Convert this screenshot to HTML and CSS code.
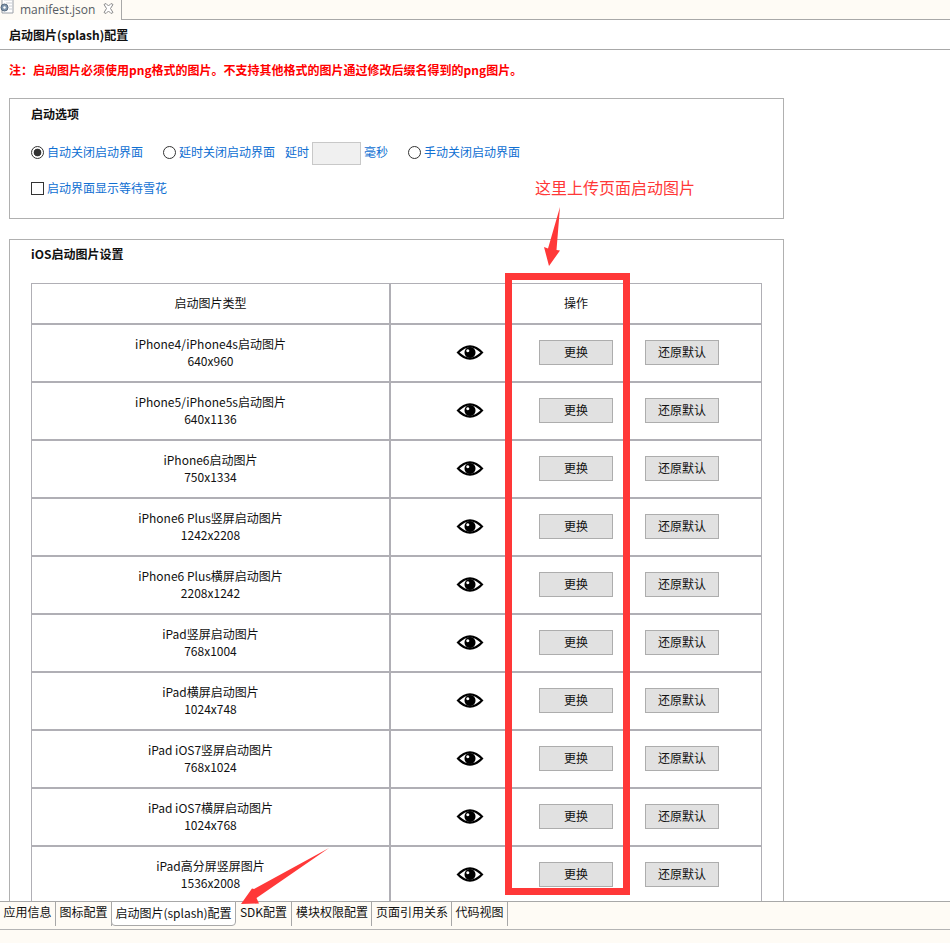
FILE: index.html
```html
<!DOCTYPE html>
<html lang="zh">
<head>
<meta charset="utf-8">
<title>manifest.json</title>
<link rel="stylesheet" href="styles.css">
</head>
<body>
<svg width="0" height="0" class="defs"><defs>
<symbol id="eye" viewBox="0 0 28 17">
<path d="M0.5 8.5C5 3.500 9.500 1.200 14 1.200S23 3.500 27.500 8.500C23 13.500 18.500 15.800 14 15.800S5 13.500 0.500 8.500ZM3.500 8.500C7 11.600 10.500 13.500 14 13.500S21 11.600 24.500 8.500C21 5.400 17.500 3.500 14 3.500S7 5.400 3.500 8.500Z" fill-rule="evenodd"/>
<path d="M14 3a5.500 5.500 0 1 0 .01 0ZM11.800 5.200a1.500 1.500 0 1 1-.01 0Z" fill-rule="evenodd"/>
</symbol>
</defs></svg>
<div class="page">
  <div class="top-tabs">
    <div class="file-tab">
      <svg class="file-icon" width="15" height="17" viewBox="0 0 15 17"><path d="M2 0V14H13V0" fill="#fff" stroke="#9aa0a8"/><path d="M4 1H12M6 4H12M9 7H12M9 10H12" stroke="#c8ccd2"/><circle cx="4.500" cy="8.500" r="3.500" fill="#7f96ad" stroke="#56697d"/><circle cx="4.500" cy="8.500" r="1.200" fill="#fff"/></svg>
      <span class="file-name">manifest.json</span>
      <svg class="file-close" width="11" height="11" viewBox="0 0 11 11"><path d="M1 1.500L3 .5L5.500 3L8 .5L10 1.500L7.500 5.500L10 9.500L8 10.500L5.500 8L3 10.500L1 9.500L3.500 5.500Z" fill="#fff" stroke="#8b8b8b"/></svg>
    </div>
    <div class="tab-fill"></div>
  </div>
  <main class="content">
    <h1 class="page-title">启动图片(splash)配置</h1>
    <p class="notice">注：启动图片必须使用png格式的图片。不支持其他格式的图片通过修改后缀名得到的png图片。</p>
    <section class="panel panel-options">
      <h2 class="panel-title">启动选项</h2>
      <div class="options-row">
        <span class="radio radio-on"></span><span class="opt-label">自动关闭启动界面</span>
        <span class="radio radio-second"></span><span class="opt-label">延时关闭启动界面</span>
        <span class="opt-label delay-label">延时</span><span class="delay-input"></span><span class="opt-label">毫秒</span>
        <span class="radio radio-third"></span><span class="opt-label">手动关闭启动界面</span>
      </div>
      <div class="check-row"><span class="checkbox"></span><span class="opt-label">启动界面显示等待雪花</span></div>
    </section>
    <section class="panel panel-ios">
      <h2 class="panel-title">iOS启动图片设置</h2>
      <div class="table">
        <div class="row row-head">
          <div class="cell-name">启动图片类型</div>
          <div class="cell-actions"><span></span><span class="head-op">操作</span><span></span></div>
        </div>
        <div class="row">
          <div class="cell-name"><div>iPhone4/iPhone4s启动图片</div><div>640x960</div></div>
          <div class="cell-actions"><svg class="eye"><use href="#eye"/></svg><button class="btn">更换</button><button class="btn">还原默认</button></div>
        </div>
        <div class="row">
          <div class="cell-name"><div>iPhone5/iPhone5s启动图片</div><div>640x1136</div></div>
          <div class="cell-actions"><svg class="eye"><use href="#eye"/></svg><button class="btn">更换</button><button class="btn">还原默认</button></div>
        </div>
        <div class="row">
          <div class="cell-name"><div>iPhone6启动图片</div><div>750x1334</div></div>
          <div class="cell-actions"><svg class="eye"><use href="#eye"/></svg><button class="btn">更换</button><button class="btn">还原默认</button></div>
        </div>
        <div class="row">
          <div class="cell-name"><div>iPhone6 Plus竖屏启动图片</div><div>1242x2208</div></div>
          <div class="cell-actions"><svg class="eye"><use href="#eye"/></svg><button class="btn">更换</button><button class="btn">还原默认</button></div>
        </div>
        <div class="row">
          <div class="cell-name"><div>iPhone6 Plus横屏启动图片</div><div>2208x1242</div></div>
          <div class="cell-actions"><svg class="eye"><use href="#eye"/></svg><button class="btn">更换</button><button class="btn">还原默认</button></div>
        </div>
        <div class="row">
          <div class="cell-name"><div>iPad竖屏启动图片</div><div>768x1004</div></div>
          <div class="cell-actions"><svg class="eye"><use href="#eye"/></svg><button class="btn">更换</button><button class="btn">还原默认</button></div>
        </div>
        <div class="row">
          <div class="cell-name"><div>iPad横屏启动图片</div><div>1024x748</div></div>
          <div class="cell-actions"><svg class="eye"><use href="#eye"/></svg><button class="btn">更换</button><button class="btn">还原默认</button></div>
        </div>
        <div class="row">
          <div class="cell-name"><div>iPad iOS7竖屏启动图片</div><div>768x1024</div></div>
          <div class="cell-actions"><svg class="eye"><use href="#eye"/></svg><button class="btn">更换</button><button class="btn">还原默认</button></div>
        </div>
        <div class="row">
          <div class="cell-name"><div>iPad iOS7横屏启动图片</div><div>1024x768</div></div>
          <div class="cell-actions"><svg class="eye"><use href="#eye"/></svg><button class="btn">更换</button><button class="btn">还原默认</button></div>
        </div>
        <div class="row">
          <div class="cell-name"><div>iPad高分屏竖屏图片</div><div>1536x2008</div></div>
          <div class="cell-actions"><svg class="eye"><use href="#eye"/></svg><button class="btn">更换</button><button class="btn">还原默认</button></div>
        </div>
      </div>
    </section>
  </main>
  <nav class="bottom-tabs">
    <div class="btab btab-a">应用信息</div>
    <div class="btab btab-a">图标配置</div>
    <div class="btab btab-active">启动图片(splash)配置</div>
    <div class="btab btab-a">SDK配置</div>
    <div class="btab btab-b">模块权限配置</div>
    <div class="btab btab-b">页面引用关系</div>
    <div class="btab btab-a">代码视图</div>
  </nav>
  <div class="callout-text">这里上传页面启动图片</div>
  <div class="callout-box"></div>
  <svg class="callout-arrows" width="950" height="943" viewBox="0 0 950 943">
    <path d="M560 207L556.500 250L560 250.500L549 266L544 247L548 248.500Z" fill="#ff3838"/>
    <path d="M329 848L254 889L252 888.500L241 904L259 903.500L256.500 898Z" fill="#ff3838"/>
  </svg>
</div>
</body>
</html>
```
FILE: styles.css
```css
* { box-sizing: border-box; }
html, body { margin: 0; padding: 0; }
body {
  background: #fff;
  color: #111;
  font-family: "Noto Sans CJK SC", "Noto Sans", sans-serif;
  font-size: 12px;
}
.defs { position: absolute; }
.page {
  position: relative;
  width: 950px;
  height: 943px;
  overflow: hidden;
  display: flex;
  flex-direction: column;
}
.top-tabs { display: flex; height: 20px; flex: none; }
.file-tab {
  width: 122px;
  height: 20px;
  background: #fefbf5;
  border-right: 1px solid #a8a8a8;
  display: flex;
  align-items: center;
  overflow: hidden;
}
.file-icon { flex: none; margin-top: -6px; margin-left: 0; }
.file-name {
  margin-left: 5px;
  font-family: "Open Sans", sans-serif;
  font-size: 12px;
  line-height: 17px;
  color: #555b63;
  margin-top: -2px;
}
.file-close { flex: none; margin-left: 8px; margin-top: -3px; }
.tab-fill { flex: 1; background: #fefbf5; border-bottom: 1px solid #a8a8a8; }
.content { flex: 1; min-height: 0; overflow: hidden; }
.page-title {
  margin: 0;
  height: 30px;
  padding: 6px 0 0 9px;
  font-size: 12px;
  line-height: 17px;
  font-weight: 700;
  border-bottom: 1px solid #a8a8a8;
}
.notice {
  margin: 11px 0 20px 9px;
  font-size: 12px;
  line-height: 17px;
  font-weight: 700;
  color: #ff0000;
}
.panel {
  margin: 0 0 20px 9px;
  width: 775px;
  border: 1px solid #b0b0b0;
  padding: 6px 21px 0;
}
.panel-options { height: 121px; }
.panel-title {
  margin: 0;
  font-size: 12px;
  line-height: 17px;
  font-weight: 700;
  color: #111;
}
.options-row {
  display: flex;
  align-items: center;
  height: 20px;
  margin-top: 20px;
}
.opt-label { color: #0f6fd2; line-height: 17px; white-space: nowrap; padding-bottom: 2px; }
.radio {
  flex: none;
  width: 13px;
  height: 13px;
  border: 1px solid #333;
  border-radius: 50%;
  margin-right: 3px;
}
.radio-on { background: radial-gradient(circle, #333 0, #333 3.500px, #fff 4.200px); }
.radio-second { margin-left: 20px; }
.radio-third { margin-left: 20px; }
.delay-label { margin-left: 10px; }
.delay-input {
  width: 49px;
  height: 23px;
  margin: 0 3px;
  align-self: flex-start;
  background: #f0f0f0;
  border: 1px solid #c8c8c8;
}
.check-row {
  display: flex;
  align-items: center;
  height: 17px;
  margin-top: 18px;
}
.checkbox {
  flex: none;
  width: 13px;
  height: 13px;
  border: 1px solid #333;
  margin-right: 3px;
}
.panel-ios { height: 900px; padding-top: 5px; }
.table {
  margin-top: 21px;
  width: 731px;
  border: solid #b0afb5;
  border-width: 1px 1px 0;
}
.row {
  display: flex;
  height: 58px;
  border-bottom: 2px solid #b0afb5;
}
.row-head { height: 41px; }
.cell-name {
  width: 359px;
  flex: none;
  border-right: 2px solid #b0afb5;
  display: flex;
  flex-direction: column;
  align-items: center;
  justify-content: center;
  padding-bottom: 2px;
  line-height: 17px;
  white-space: nowrap;
  color: #111;
}
.cell-actions {
  flex: 1;
  padding: 0 0 1px 26px;
  display: grid;
  grid-template-columns: repeat(3, 106px);
  align-items: center;
  justify-items: center;
}
.head-op { color: #111; margin-bottom: 1px; }
.eye { width: 28px; height: 17px; fill: #000; }
.btn {
  width: 74px;
  height: 25px;
  padding: 0 0 2px;
  background: #e1e1e1;
  border: 1px solid #adadad;
  border-radius: 0;
  font: inherit;
  color: #111;
}
.bottom-tabs {
  flex: none;
  height: 42px;
  background: #fefbf5;
  border-top: 1px solid #a8a8a8;
  display: flex;
  align-items: flex-start;
  position: relative;
}
.bottom-tabs::after {
  content: "";
  position: absolute;
  left: 0;
  right: 0;
  top: 27px;
  border-top: 1px solid #b4b4b4;
}
.btab {
  height: 24px;
  line-height: 20px;
  text-align: center;
  border-right: 1px solid #a8a8a8;
  white-space: nowrap;
  color: #111;
}
.btab-a { width: 56px; }
.btab-b { width: 80px; padding-left: 1px; }
.btab-active {
  width: 125px;
  height: 25px;
  margin-top: -1px;
  line-height: 22px;
  background: #fff;
  border: 1px solid #a8a8a8;
  border-radius: 0 0 4px 4px;
  position: relative;
  z-index: 1;
  margin-left: -1px;
}
.callout-text {
  position: absolute;
  left: 535px;
  top: 176px;
  font-size: 16px;
  line-height: 22px;
  color: #ff3838;
  white-space: nowrap;
}
.callout-box {
  position: absolute;
  left: 505px;
  top: 273px;
  width: 125px;
  height: 622px;
  border: 7px solid #ff3838;
}
.callout-arrows { position: absolute; left: 0; top: 0; pointer-events: none; }
```
